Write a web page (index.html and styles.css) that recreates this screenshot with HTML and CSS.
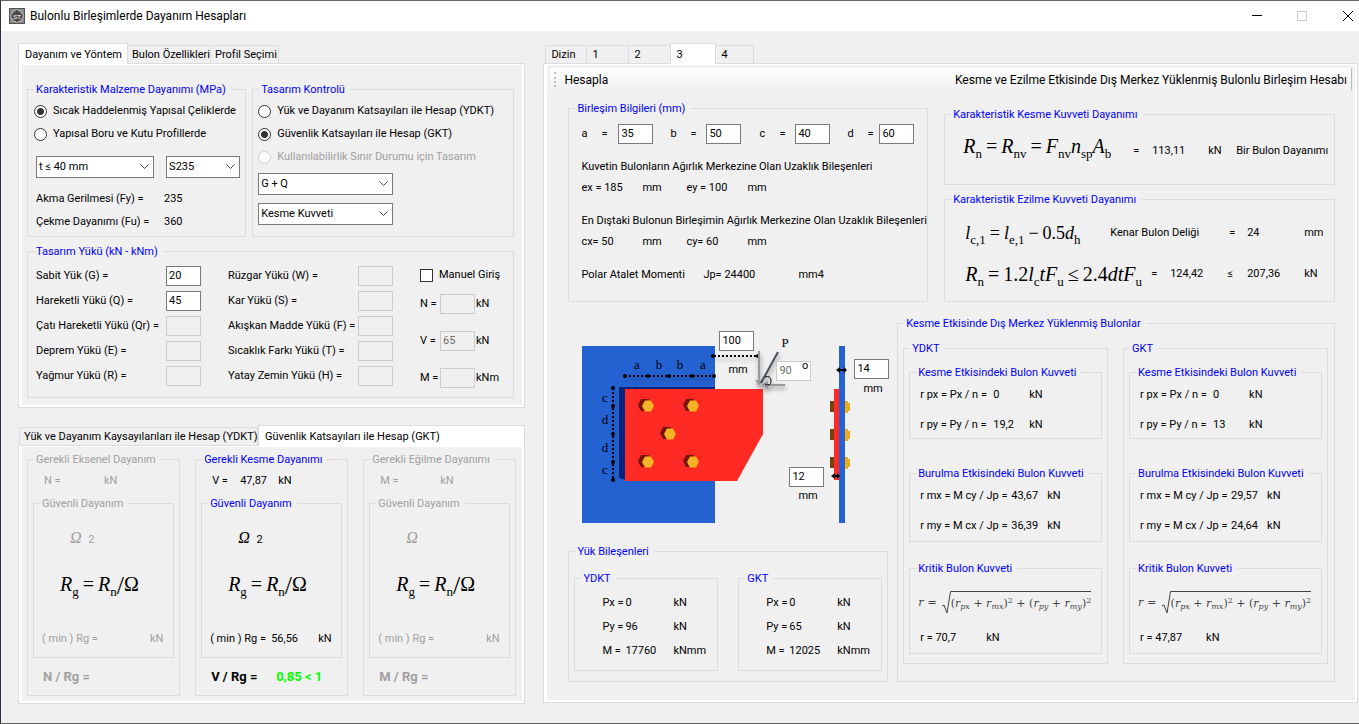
FILE: index.html
```html
<!DOCTYPE html>
<html lang="tr">
<head>
  <meta charset="UTF-8" />
  <title>Bulonlu Birleşimlerde Dayanım Hesapları</title>
  <link rel="stylesheet" href="styles.css">
</head>
<body>

  <header class="titlebar">
    <svg class="app-icon" viewBox="0 0 16 16" width="16" height="16" aria-hidden="true">
      <rect x="0.500" y="0.500" width="15" height="15" fill="#8c8c8c" stroke="#505050"/>
      <path d="M2 6l2-1 0-2 2 0 2-2 2 2 2 0 0 2 2 1v4l-2 1 0 2-2 0-2 2-2-2-2 0 0-2-2-1z" fill="#4a4a4a" stroke="#d0d0d0" stroke-width=".7"/>
      <text x="8" y="10.500" text-anchor="middle" class="icon-text">ST</text>
    </svg>
    <h1>Bulonlu Birleşimlerde Dayanım Hesapları</h1>
    <div class="window-buttons">
      <button type="button" aria-label="Simge durumuna küçült"><svg width="12" height="12"><path d="M1 5.500h10" stroke="#000"/></svg></button>
      <button type="button" aria-label="Ekranı kapla" disabled><svg width="12" height="12"><path d="M1.500 1.500h9v9h-9z" fill="none" stroke="#c8c8c8"/></svg></button>
      <button type="button" aria-label="Kapat"><svg width="12" height="12"><path d="M1 1l10 10M11 1L1 11" stroke="#000"/></svg></button>
    </div>
  </header>

  <main class="workspace">
    <div class="left">

      <!-- Dayanım ve Yöntem -->
      <section>
        <div class="tabs" role="tablist">
          <button type="button" role="tab" class="tab active w-method">Dayanım ve Yöntem</button>
          <button type="button" role="tab" class="tab w-bolt">Bulon Özellikleri</button>
          <button type="button" role="tab" class="tab w-profile">Profil Seçimi</button>
        </div>
        <div class="panel">
          <div class="page page-method">
            <div class="method-top">
              <fieldset class="group">
                <legend>Karakteristik Malzeme Dayanımı (MPa)</legend>
                <div class="stack material">
                  <label class="choice"><input type="radio" name="malzeme" checked> Sıcak Haddelenmiş Yapısal Çeliklerde</label>
                  <label class="choice"><input type="radio" name="malzeme"> Yapısal Boru ve Kutu Profillerde</label>
                  <div class="selects">
                    <select aria-label="Kalınlık"><option>t ≤ 40 mm</option></select>
                    <select aria-label="Çelik sınıfı"><option>S235</option></select>
                  </div>
                  <div class="pair"><span>Akma Gerilmesi (Fy) =</span><span>235</span></div>
                  <div class="pair"><span>Çekme Dayanımı (Fu) =</span><span>360</span></div>
                </div>
              </fieldset>
              <fieldset class="group">
                <legend>Tasarım Kontrolü</legend>
                <div class="stack control">
                  <label class="choice"><input type="radio" name="kontrol"> Yük ve Dayanım Katsayıları ile Hesap (YDKT)</label>
                  <label class="choice"><input type="radio" name="kontrol" checked> Güvenlik Katsayıları ile Hesap (GKT)</label>
                  <label class="choice off"><input type="radio" name="kontrol" disabled> Kullanılabilirlik Sınır Durumu için Tasarım</label>
                  <select aria-label="Yük birleşimi"><option>G + Q</option></select>
                  <select aria-label="Kontrol türü"><option>Kesme Kuvveti</option></select>
                </div>
              </fieldset>
            </div>

            <fieldset class="group">
              <legend>Tasarım Yükü (kN - kNm)</legend>
              <div class="loads">
                <div class="load-list">
                  <label for="g">Sabit Yük (G) =</label><input id="g" type="text" value="20">
                  <label for="q">Hareketli Yükü (Q) =</label><input id="q" type="text" value="45">
                  <label for="qr">Çatı Hareketli Yükü (Qr) =</label><input id="qr" type="text" disabled>
                  <label for="e">Deprem Yükü (E) =</label><input id="e" type="text" disabled>
                  <label for="r">Yağmur Yükü (R) =</label><input id="r" type="text" disabled>
                </div>
                <div class="load-list">
                  <label for="w">Rüzgar Yükü (W) =</label><input id="w" type="text" disabled>
                  <label for="s">Kar Yükü (S) =</label><input id="s" type="text" disabled>
                  <label for="f">Akışkan Madde Yükü (F) =</label><input id="f" type="text" disabled>
                  <label for="t">Sıcaklık Farkı Yükü (T) =</label><input id="t" type="text" disabled>
                  <label for="h">Yatay Zemin Yükü (H) =</label><input id="h" type="text" disabled>
                </div>
                <div class="manual">
                  <label class="choice"><input type="checkbox"> Manuel Giriş</label>
                  <div class="manual-row"><label for="mn">N =</label><input id="mn" type="text" disabled><span>kN</span></div>
                  <div class="manual-row"><label for="mv">V =</label><input id="mv" type="text" value="65" disabled><span>kN</span></div>
                  <div class="manual-row"><label for="mm">M =</label><input id="mm" type="text" disabled><span>kNm</span></div>
                </div>
              </div>
            </fieldset>
          </div>
        </div>
      </section>

      <!-- Sonuçlar -->
      <section>
        <div class="tabs tabs-result" role="tablist">
          <button type="button" role="tab" class="tab w-ydkt">Yük ve Dayanım Kaysayılarıları ile Hesap (YDKT)</button>
          <button type="button" role="tab" class="tab active w-gkt">Güvenlik Katsayıları ile Hesap (GKT)</button>
        </div>
        <div class="panel">
          <div class="page page-result">
            <fieldset class="group off" disabled>
              <legend>Gerekli Eksenel Dayanım</legend>
              <div class="need"><span>N =</span><span></span><span>kN</span></div>
              <fieldset class="group safe">
                <legend>Güvenli Dayanım</legend>
                <div class="omega"><i>Ω</i> 2</div>
                <div class="math math-m"><i>R</i><sub>g</sub><b>=</b><i>R</i><sub>n</sub><span class="slash">/</span>Ω</div>
                <div class="min"><span>( min ) Rg =</span><span></span><span>kN</span></div>
              </fieldset>
              <div class="ratio"><span>N / Rg =</span></div>
            </fieldset>
            <fieldset class="group">
              <legend>Gerekli Kesme Dayanımı</legend>
              <div class="need"><span>V =</span><span>47,87</span><span>kN</span></div>
              <fieldset class="group safe">
                <legend>Güvenli Dayanım</legend>
                <div class="omega"><i>Ω</i> 2</div>
                <div class="math math-m"><i>R</i><sub>g</sub><b>=</b><i>R</i><sub>n</sub><span class="slash">/</span>Ω</div>
                <div class="min"><span>( min ) Rg =</span><span>56,56</span><span>kN</span></div>
              </fieldset>
              <div class="ratio"><span>V / Rg =</span><span class="ok">0,85 &lt; 1</span></div>
            </fieldset>
            <fieldset class="group off" disabled>
              <legend>Gerekli Eğilme Dayanımı</legend>
              <div class="need"><span>M =</span><span></span><span>kN</span></div>
              <fieldset class="group safe">
                <legend>Güvenli Dayanım</legend>
                <div class="omega"><i>Ω</i></div>
                <div class="math math-m"><i>R</i><sub>g</sub><b>=</b><i>R</i><sub>n</sub><span class="slash">/</span>Ω</div>
                <div class="min"><span>( min ) Rg =</span><span></span><span>kN</span></div>
              </fieldset>
              <div class="ratio"><span>M / Rg =</span></div>
            </fieldset>
          </div>
        </div>
      </section>
    </div>

    <!-- Birleşim hesabı -->
    <section class="right">
      <div class="tabs tabs-index" role="tablist">
        <button type="button" role="tab" class="tab">Dizin</button>
        <button type="button" role="tab" class="tab">1</button>
        <button type="button" role="tab" class="tab">2</button>
        <button type="button" role="tab" class="tab active">3</button>
        <button type="button" role="tab" class="tab">4</button>
      </div>
      <div class="panel">
        <div class="page page-joint">
          <div class="toolbar">
            <button type="button">Hesapla</button>
            <span>Kesme ve Ezilme Etkisinde Dış Merkez Yüklenmiş Bulonlu Birleşim Hesabı</span>
          </div>

          <div class="joint-top">
            <fieldset class="group info">
              <legend>Birleşim Bilgileri (mm)</legend>
              <div class="dims">
                <label for="da">a</label><span>=</span><input id="da" type="text" value="35">
                <label for="db">b</label><span>=</span><input id="db" type="text" value="50">
                <label for="dc">c</label><span>=</span><input id="dc" type="text" value="40">
                <label for="dd">d</label><span>=</span><input id="dd" type="text" value="60">
              </div>
              <p>Kuvetin Bulonların Ağırlık Merkezine Olan Uzaklık Bileşenleri</p>
              <div class="parts"><span>ex = 185</span><span>mm</span><span>ey = 100</span><span>mm</span></div>
              <p>En Dıştaki Bulonun Birleşimin Ağırlık Merkezine Olan Uzaklık Bileşenleri</p>
              <div class="parts"><span>cx= 50</span><span>mm</span><span>cy= 60</span><span>mm</span></div>
              <div class="polar"><span>Polar Atalet Momenti</span><span>Jp= 24400</span><span>mm4</span></div>
            </fieldset>

            <div class="strengths">
              <fieldset class="group shear">
                <legend>Karakteristik Kesme Kuvveti Dayanımı</legend>
                <div class="shear-row">
                  <div class="math math-l"><i>R</i><sub>n</sub><b>=</b><i>R</i><sub>nv</sub><b>=</b><i>F</i><sub>nv</sub><i>n</i><sub>sp</sub><i>A</i><sub>b</sub></div>
                  <span>=</span><span>113,11</span><span>kN</span><span>Bir Bulon Dayanımı</span>
                </div>
              </fieldset>
              <fieldset class="group bearing">
                <legend>Karakteristik Ezilme Kuvveti Dayanımı</legend>
                <div class="edge-row">
                  <div class="math math-e"><i>l</i><sub>c,1</sub><b>=</b><i>l</i><sub>e,1</sub><b>−</b>0.5<i>d</i><sub>h</sub></div>
                  <span>Kenar Bulon Deliği</span><span>=</span><span>24</span><span>mm</span>
                </div>
                <div class="bearing-row">
                  <div class="math math-l"><i>R</i><sub>n</sub><b>=</b>1.2<i>l</i><sub>c</sub><i>tF</i><sub>u</sub><b>≤</b>2.4<i>dtF</i><sub>u</sub></div>
                  <span>=</span><span>124,42</span><span>≤</span><span>207,36</span><span>kN</span>
                </div>
              </fieldset>
            </div>
          </div>

          <div class="joint-bottom">
            <div class="drawing-side">
              <figure class="drawing">
                <svg viewBox="568 315 322 228" width="322" height="228" role="img" aria-label="Birleşim çizimi">
                  <defs>
                    <filter id="shade" filterUnits="userSpaceOnUse" x="568" y="315" width="322" height="228"><feDropShadow dx="1" dy="3" stdDeviation="2" flood-opacity=".4"/></filter>
                    <g id="bolt">
                      <path d="M-9-1l3-6h8v12h-8z" fill="#76130b"/>
                      <path d="M-5 0l3-5.500h6l3 5.500-3 5.500h-6z" fill="#f6b225"/>
                    </g>
                    <g id="sidebolt">
                      <path d="M830 -5h4v11h-4z" fill="#75420e"/>
                      <path d="M845-5h3v2h2v8h-2v2h-3z" fill="#f2aa1d"/>
                    </g>
                  </defs>
                  <path d="M582 346h133v177h-133z" fill="#2462d2"/>
                  <path d="M619 387h96v3h-89v90l-7-2z" fill="#08237d"/>
                  <path d="M625 389h138v45l-26 47h-112z" fill="#ff2a23"/>
                  <use href="#bolt" x="647" y="406"/><use href="#bolt" x="692" y="406"/>
                  <use href="#bolt" x="669" y="434"/>
                  <use href="#bolt" x="647" y="462"/><use href="#bolt" x="692" y="462"/>
                  <g filter="url(#shade)" stroke="#000" stroke-width="2" stroke-dasharray="2 2">
                    <path d="M625 376h90M714 356h44"/><path d="M613 388v92"/>
                  </g>
                  <g fill="#000">
                    <circle cx="625" cy="376" r="2"/><circle cx="648" cy="376" r="2"/><circle cx="669" cy="376" r="2"/><circle cx="692" cy="376" r="2"/><circle cx="714" cy="376" r="2"/>
                    <circle cx="613" cy="388" r="2"/><circle cx="613" cy="406" r="2"/><circle cx="613" cy="434" r="2"/><circle cx="613" cy="462" r="2"/><circle cx="613" cy="480" r="2"/>
                    <circle cx="713" cy="356" r="2"/><circle cx="758" cy="356" r="2"/>
                  </g>
                  <g class="dim-text" text-anchor="middle">
                    <text x="637" y="369">a</text><text x="659" y="369">b</text><text x="680" y="369">b</text><text x="703" y="369">a</text>
                    <text x="605" y="402">c</text><text x="605" y="424">d</text><text x="605" y="452">d</text><text x="605" y="474">c</text>
                    <text x="785" y="347">P</text>
                  </g>
                  <g filter="url(#shade)" fill="none">
                    <path d="M759 351v31M762 385h23" stroke="#999" stroke-width="2"/>
                    <path d="M755 380h8l-4 6zM768 381v8l-7-4z" fill="#999"/>
                    <path d="M761 383l17-31" stroke="#465158" stroke-width="2"/>
                    <path d="M765 377q6-2 6 4t-6 3" stroke="#111"/>
                  </g>
                  <path d="M834 389h5v91h-5z" fill="#ff2a23"/>
                  <path d="M839 346h6v177h-6z" fill="#2462d2"/>
                  <use href="#sidebolt" y="406"/><use href="#sidebolt" y="434"/><use href="#sidebolt" y="462"/>
                  <path d="M836 370l4-3v2h4v-2l3 3-3 3v-2h-4v2zM831 476l4-3v2h2v-2l3 3-3 3v-2h-2v2z"/>
                </svg>
                <input class="at-e" type="text" value="100" aria-label="Kuvvet mesafesi">
                <span class="at-e-unit">mm</span>
                <div class="at-angle"><input type="text" value="90" aria-label="Kuvvet açısı" disabled><span>o</span></div>
                <input class="at-t1" type="text" value="14" aria-label="Levha kalınlığı">
                <span class="at-t1-unit">mm</span>
                <input class="at-t2" type="text" value="12" aria-label="Guse kalınlığı">
                <span class="at-t2-unit">mm</span>
              </figure>

              <fieldset class="group forces">
                <legend>Yük Bileşenleri</legend>
                <fieldset class="group force-list">
                  <legend>YDKT</legend>
                  <div><span>Px =</span><span>0</span><span>kN</span></div>
                  <div><span>Py =</span><span>96</span><span>kN</span></div>
                  <div><span>M =</span><span>17760</span><span>kNmm</span></div>
                </fieldset>
                <fieldset class="group force-list">
                  <legend>GKT</legend>
                  <div><span>Px =</span><span>0</span><span>kN</span></div>
                  <div><span>Py =</span><span>65</span><span>kN</span></div>
                  <div><span>M =</span><span>12025</span><span>kNmm</span></div>
                </fieldset>
              </fieldset>
            </div>

            <fieldset class="group bolts">
              <legend>Kesme Etkisinde Dış Merkez Yüklenmiş Bulonlar</legend>
              <fieldset class="group method">
                <legend>YDKT</legend>
                <fieldset class="group r-shear">
                  <legend>Kesme Etkisindeki Bulon Kuvveti</legend>
                  <div><span>r px = Px / n =</span><span>0</span><span>kN</span></div>
                  <div><span>r py = Py / n =</span><span>19,2</span><span>kN</span></div>
                </fieldset>
                <fieldset class="group r-torsion">
                  <legend>Burulma Etkisindeki Bulon Kuvveti</legend>
                  <div><span>r mx = M cy / Jp =</span><span>43,67</span><span>kN</span></div>
                  <div><span>r my = M cx / Jp =</span><span>36,39</span><span>kN</span></div>
                </fieldset>
                <fieldset class="group r-critical">
                  <legend>Kritik Bulon Kuvveti</legend>
                  <div class="math math-s"><i>r</i><b>=</b><svg width="10" height="24"><path d="M1 15l2-1 3 8 3.500-21.500h1" fill="none" stroke="#444"/></svg><span class="root">(<i>r</i><sub><i>px</i></sub> + <i>r</i><sub><i>mx</i></sub>)<sup>2</sup> + (<i>r</i><sub><i>py</i></sub> + <i>r</i><sub><i>my</i></sub>)<sup>2</sup></span></div>
                  <div class="critical"><span>r = 70,7</span><span>kN</span></div>
                </fieldset>
              </fieldset>
              <fieldset class="group method">
                <legend>GKT</legend>
                <fieldset class="group r-shear">
                  <legend>Kesme Etkisindeki Bulon Kuvveti</legend>
                  <div><span>r px = Px / n =</span><span>0</span><span>kN</span></div>
                  <div><span>r py = Py / n =</span><span>13</span><span>kN</span></div>
                </fieldset>
                <fieldset class="group r-torsion">
                  <legend>Burulma Etkisindeki Bulon Kuvveti</legend>
                  <div><span>r mx = M cy / Jp =</span><span>29,57</span><span>kN</span></div>
                  <div><span>r my = M cx / Jp =</span><span>24,64</span><span>kN</span></div>
                </fieldset>
                <fieldset class="group r-critical">
                  <legend>Kritik Bulon Kuvveti</legend>
                  <div class="math math-s"><i>r</i><b>=</b><svg width="10" height="24"><path d="M1 15l2-1 3 8 3.500-21.500h1" fill="none" stroke="#444"/></svg><span class="root">(<i>r</i><sub><i>px</i></sub> + <i>r</i><sub><i>mx</i></sub>)<sup>2</sup> + (<i>r</i><sub><i>py</i></sub> + <i>r</i><sub><i>my</i></sub>)<sup>2</sup></span></div>
                  <div class="critical"><span>r = 47,87</span><span>kN</span></div>
                </fieldset>
              </fieldset>
            </fieldset>
          </div>
        </div>
      </div>
    </section>
  </main>

</body>
</html>
```
FILE: styles.css
```css
* { box-sizing: border-box; }
body {
  margin: 0;
  min-height: 100vh;
  background: #f0f0f0;
  border: 1px solid #666;
  border-left-color: #2f2f3f;
  border-right: 0;
  color: #000;
  font: 11px/20px Roboto, "Liberation Sans", Arial, sans-serif;
}
button, input, select { font: inherit; color: inherit; }
p { margin: 0; }
p, span, label, legend, button { white-space: nowrap; }

/* title bar */
.titlebar {
  display: flex;
  align-items: center;
  height: 30px;
  padding-left: 8px;
  background: #fff;
}
h1 { flex: 1; margin: 0 0 0 5px; font-size: 12px; font-weight: normal; line-height: 20px; }
.icon-text { font: bold 6px "Liberation Sans", sans-serif; fill: #ddd; }
.window-buttons { display: flex; }
.window-buttons button { width: 45px; height: 30px; padding: 0; border: 0; background: none; }
.window-buttons button:last-child { width: 23px; margin-left: 12px; }
.window-buttons svg { display: block; margin: auto; }

.workspace {
  display: grid;
  grid-template-columns: minmax(0, 507fr) minmax(0, 814fr);
  gap: 18px;
  padding: 12px 1px 19px 17px;
}
.left { display: flex; flex-direction: column; gap: 17px; }

/* tabs */
.tabs { display: flex; align-items: flex-end; height: 20px; }
.tab {
  height: 18px;
  padding: 0 0 0 4px;
  border: 1px solid #dcdcdc;
  border-left: 0;
  border-bottom: 0;
  background: #f0f0f0;
  line-height: 18px;
  text-align: left;
}
.tab:first-child { border-left: 1px solid #dcdcdc; }
.tab.active { height: 21px; margin-bottom: -1px; padding-left: 6px; background: #fff; border-left: 1px solid #dcdcdc; position: relative; line-height: 19px; }
.w-method { width: 110px; }
.w-bolt { width: 83px; }
.w-profile { width: 68px; }
.tabs-result { padding-left: 1px; }
.w-ydkt { width: 239px; }
.w-gkt { flex: 1; }
.tabs-index { padding-left: 2px; }
.tabs-index .tab { width: 42px; padding-left: 5px; }
.tabs-index .tab.active { width: 46px; margin-left: -1px; }
.tabs-index .tab:last-child { width: 38px; }

.panel { padding: 1px 2px 2px 3px; border: 1px solid #dcdcdc; background: #fff; }
.page { background: #f0f0f0; }

/* group boxes: the caption keeps its place whatever the inset of the content */
.group { --inset: 0px; min-width: 0; margin: 0; padding: 0 0 0 var(--inset); border: 1px solid #dcdcdc; }
legend { margin-left: calc(6px - var(--inset)); padding: 2px 5px 0 2px; color: #00f; line-height: 14px; }
.off, .off legend { color: #a0a0a0; }

/* form controls */
input[type="text"] {
  width: 35px;
  height: 20px;
  padding: 0 2px;
  border: 1px solid #7a7a7a;
  border-radius: 0;
  background: #fff;
}
input[type="text"]:disabled { border-color: #ccc; background: #f0f0f0; color: #6d6d6d; }
input[type="radio"], input[type="checkbox"] {
  appearance: none;
  flex: none;
  width: 13px;
  height: 13px;
  margin: 0;
  border: 1px solid #333;
  background: #fff;
}
input[type="radio"] { border-radius: 50%; }
input[type="radio"]:checked { background: radial-gradient(#333 3px, #fff 4px); }
input[type="radio"]:disabled { border-color: #ccc; }
.choice { display: flex; align-items: center; gap: 6px; height: 20px; }
select {
  appearance: none;
  height: 22px;
  padding: 0 2px;
  border: 1px solid #7a7a7a;
  border-radius: 0;
  background: #fff url("data:image/svg+xml,%3Csvg xmlns='http://www.w3.org/2000/svg' width='9' height='6'%3E%3Cpath d='M.5.5l4 4 4-4' fill='none' stroke='%23444'/%3E%3C/svg%3E") no-repeat right 4px center;
}

/* strength and method */
.page-method { padding: 16px 8px 7px 5px; }
.method-top { display: grid; grid-template-columns: minmax(0, 219fr) minmax(0, 262fr); gap: 6px; margin-bottom: 6px; }
.stack { display: flex; flex-direction: column; gap: 3px; padding: 4px 5px 4px 6px; }
.selects { display: grid; grid-template-columns: 118fr 74fr; gap: 12px; margin: 9px 0 8px 2px; }
.pair { display: grid; grid-template-columns: 128px 1fr; padding-left: 2px; line-height: 20px; }
.control { padding-left: 5px; }
.control select { width: 135px; margin-top: 3px; margin-bottom: 2px; }
.loads { display: grid; grid-template-columns: 165px 165px 1fr; gap: 27px; padding: 7px 0 9px 8px; }
.load-list { display: grid; grid-template-columns: 1fr 35px; gap: 5px 0; align-content: start; }
.manual { display: flex; flex-direction: column; }
.manual-row { display: grid; grid-template-columns: 19px 35px 1fr; gap: 1px; margin-bottom: 17px; }
.manual .choice { margin-bottom: 10px; height: 18px; }
.manual-row:last-child { margin-bottom: 0; }

/* results */
.page-result { display: grid; grid-template-columns: 1fr 1fr 1fr; gap: 15px; padding: 4px 6px 5px 5px; }
.need { display: grid; grid-template-columns: 28px 38px 1fr; padding: 4px 0 4px 16px; }
.off .need { grid-template-columns: 28px 32px 1fr; }
.safe { margin: 0 5px; }
.omega { padding-left: 36px; margin-top: 15px; line-height: 24px; }
.omega i { margin-right: 4px; font: italic 16px/24px "Liberation Serif", serif; }
.min { display: grid; grid-template-columns: 61px 47px 1fr; padding: 0 0 8px 8px; }
.ratio { display: grid; grid-template-columns: 65px 1fr; padding: 9px 0 8px 15px; font-size: 13px; font-weight: bold; }
.ok { color: #0f0; }

/* formulas */
.math { white-space: nowrap; color: #000; font-family: "Liberation Serif", "Times New Roman", serif; }
.math b { padding: 0 4px; font-weight: normal; }
.math sub { line-height: 0; vertical-align: -5px; }
.math sup { line-height: 0; vertical-align: 4px; }
.math-l { font-size: 20px; line-height: 32px; }
.math-e { font-size: 18px; line-height: 32px; }
.math-l sub, .math-m sub, .math-e sub { font-size: 13px; }
.math-m { margin: 20px 0 33px 26px; font-size: 20px; line-height: 24px; }
.slash { font-size: 26px; line-height: 0; vertical-align: -3px; }
.math-s { display: flex; font: 11px/24px "DejaVu Serif", serif; color: #444; }
.math-s sub, .math-s sup { font-size: 8px; }
.math-s sub { vertical-align: -2px; }
.root { height: 24px; border-top: 1px solid #444; }

/* joint page */
.page-joint { padding: 3px 3px 18px; }
.toolbar {
  display: flex;
  justify-content: space-between;
  height: 23px;
  padding: 0 4px 0 4px;
  border-right: 1px solid #b8b8b8;
  border-radius: 2px;
  background: linear-gradient(#fdfdfd, #f0f0f0);
  font-size: 12px;
  line-height: 24px;
}
.toolbar button { height: 15px; margin-top: 4px; padding: 0 0 0 8px; border: 0; border-left: 2px dotted #bbb; background: none; line-height: 16px; }
.joint-top { display: grid; grid-template-columns: minmax(0, 360fr) minmax(0, 391fr); gap: 16px; padding: 9px 17px 13px 18px; }
.info { --inset: 12px; padding-top: 8px; padding-bottom: 16px; }
.dims { display: grid; grid-template-columns: 20px 17px 52px 20px 16px 53px 20px 16px 52px 20px 12px 35px; margin-bottom: 13px; }
.parts { display: grid; grid-template-columns: 61px 44px 61px 1fr; margin: 1px 0 13px; }
.polar { display: grid; grid-template-columns: 122px 95px 1fr; margin-top: 11px; }
.strengths { display: flex; flex-direction: column; gap: 6px; padding-top: 6px; }
.shear { --inset: 18px; padding-top: 8px; padding-bottom: 12px; }
.shear-row { display: grid; grid-template-columns: 170px 19px 56px 28px 1fr; line-height: 42px; }
.bearing { --inset: 20px; flex: 1; padding-top: 7px; }
.edge-row { display: grid; grid-template-columns: 145px 119px 18px 57px 1fr; align-items: center; padding: 3px 0 1px; }
.bearing-row { display: grid; grid-template-columns: 186px 19px 57px 20px 57px 1fr; align-items: center; padding-top: 8px; }

.joint-bottom { display: grid; grid-template-columns: minmax(0, 320fr) minmax(0, 438fr); gap: 9px; padding: 0 17px 0 18px; }
.drawing-side { display: flex; flex-direction: column; }
.drawing { position: relative; height: 228px; margin: 0; }
.drawing > svg { display: block; }
.dim-text { font: 13px "Liberation Serif", serif; }
/* fields laid over the drawing */
.drawing > input, .drawing > span, .at-angle { position: absolute; }
.at-e { left: 151px; top: 16px; }
.at-e-unit { left: 160px; top: 45px; }
.at-angle { left: 208px; top: 46px; }
.drawing .at-angle input { background: #fff; }
.at-angle span { position: absolute; right: 3px; top: -5px; }
.at-t1 { left: 286px; top: 44px; }
.at-t1-unit { left: 295px; top: 64px; }
.at-t2 { left: 221px; top: 152px; }
.at-t2-unit { left: 230px; top: 171px; }

.forces { --inset: 5px; display: grid; grid-template-columns: 1fr 1fr; gap: 20px; padding: 11px 5px 10px; }
.force-list { --inset: 27px; padding-top: 7px; padding-bottom: 9px; }
.force-list div { display: grid; grid-template-columns: 23px 48px 1fr; margin-bottom: 4px; }
.force-list div:last-child { margin-bottom: 0; }

.bolts { --inset: 5px; display: grid; grid-template-columns: 1fr 1fr; gap: 15px; padding: 9px 6px 17px 5px; }
.method { --inset: 5px; padding: 8px 5px 9px; }
.r-shear { --inset: 10px; padding-top: 5px; padding-bottom: 3px; margin-bottom: 26px; }
.r-torsion { --inset: 10px; padding-top: 5px; padding-bottom: 5px; margin-bottom: 18px; }
.r-shear div { display: grid; grid-template-columns: 73px 36px 1fr; }
.r-torsion div { display: grid; grid-template-columns: 91px 36px 1fr; }
.r-shear div:last-child, .r-torsion div:last-child { margin-top: 10px; }
.r-critical { --inset: 8px; padding-top: 15px; padding-bottom: 5px; }
.critical { display: grid; grid-template-columns: 66px 1fr; margin-top: 13px; padding-left: 2px; }
```
